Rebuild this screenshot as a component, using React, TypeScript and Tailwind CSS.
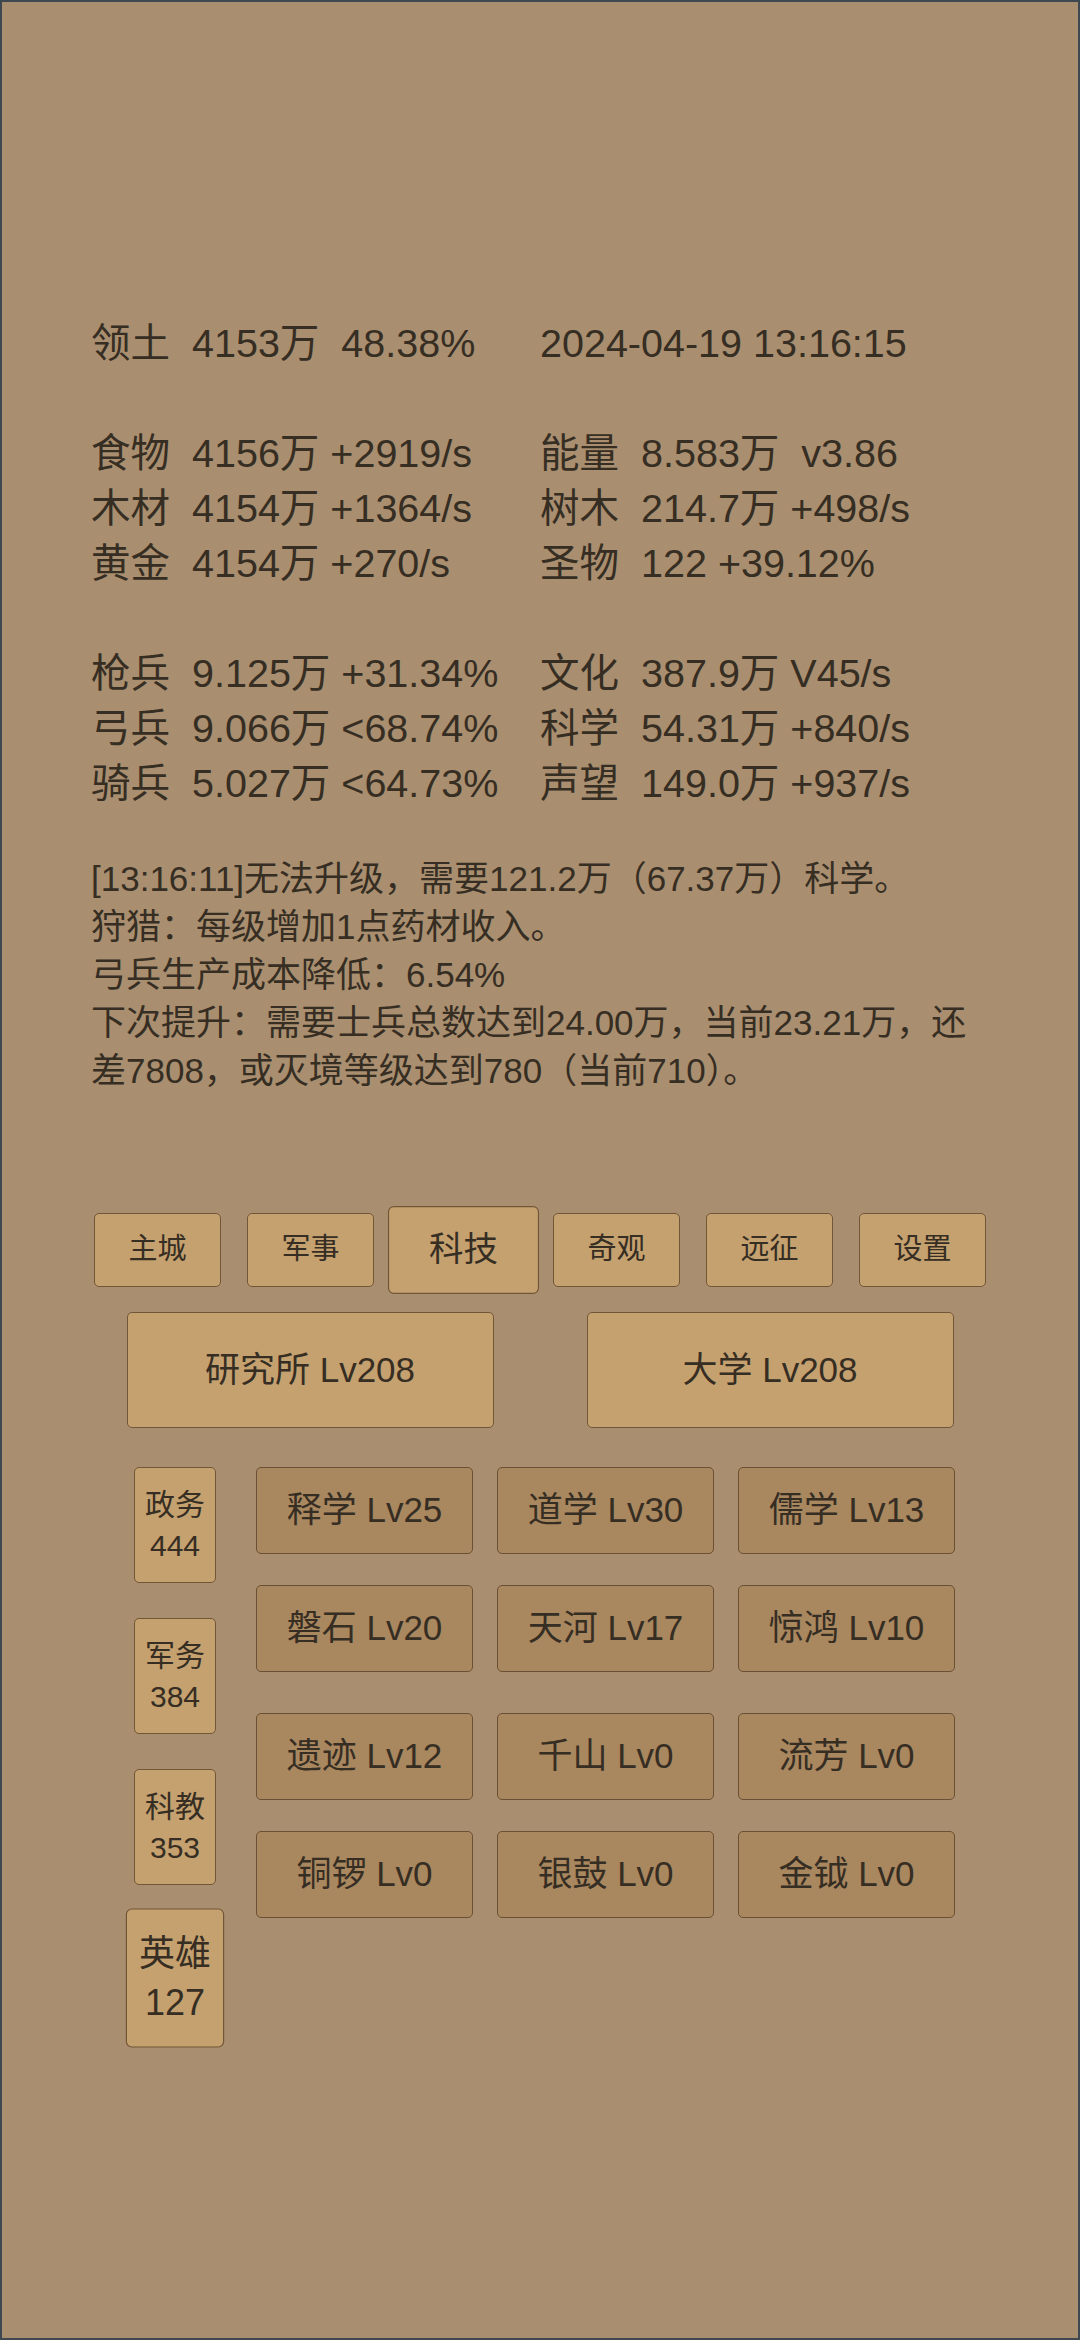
import React from 'react';

type Stat = { label?: string; value: string };

const statRows: [Stat, Stat][][] = [
  [[{ label: '领土', value: '4153万  48.38%' }, { value: '2024-04-19 13:16:15' }]],
  [
    [{ label: '食物', value: '4156万 +2919/s' }, { label: '能量', value: '8.583万  v3.86' }],
    [{ label: '木材', value: '4154万 +1364/s' }, { label: '树木', value: '214.7万 +498/s' }],
    [{ label: '黄金', value: '4154万 +270/s' }, { label: '圣物', value: '122 +39.12%' }],
  ],
  [
    [{ label: '枪兵', value: '9.125万 +31.34%' }, { label: '文化', value: '387.9万 V45/s' }],
    [{ label: '弓兵', value: '9.066万 <68.74%' }, { label: '科学', value: '54.31万 +840/s' }],
    [{ label: '骑兵', value: '5.027万 <64.73%' }, { label: '声望', value: '149.0万 +937/s' }],
  ],
];

const tabs = ['主城', '军事', '科技', '奇观', '远征', '设置'];

const sideItems = [
  { name: '政务', value: '444' },
  { name: '军务', value: '384' },
  { name: '科教', value: '353' },
  { name: '英雄', value: '127', active: true },
];

const techRows = [
  ['释学 Lv25', '道学 Lv30', '儒学 Lv13'],
  ['磐石 Lv20', '天河 Lv17', '惊鸿 Lv10'],
  ['遗迹 Lv12', '千山 Lv0', '流芳 Lv0'],
  ['铜锣 Lv0', '银鼓 Lv0', '金钺 Lv0'],
];

function StatCell({ stat }: { stat: Stat }) {
  return (
    <div className="whitespace-pre">
      {stat.label && <span className="inline-block w-[101px]">{stat.label}</span>}
      <span>{stat.value}</span>
    </div>
  );
}

export default function App() {
  return (
    <div className="w-[1080px] h-[2340px] bg-[#a98f6f] border-2 border-[#3f4851] text-[#362d23] font-['Liberation_Sans','Noto_Sans_CJK_SC',sans-serif] flex flex-col">
      {/* resources */}
      <div className="mt-[314px] ml-[89px] w-[898px] text-[39.5px] leading-[55px]">
        {statRows.map((group, gi) => (
          <div key={gi} className={gi > 0 ? 'mt-[55px]' : ''}>
            {group.map((row, ri) => (
              <div key={ri} className="grid grid-cols-2">
                <StatCell stat={row[0]} />
                <StatCell stat={row[1]} />
              </div>
            ))}
          </div>
        ))}
      </div>

      {/* log */}
      <div className="mt-[44px] ml-[89px] w-[898px] text-[35px] leading-[48px]">
        <p>[13:16:11]无法升级，需要121.2万（67.37万）科学。</p>
        <p>狩猎：每级增加1点药材收入。</p>
        <p>弓兵生产成本降低：6.54%</p>
        <p>下次提升：需要士兵总数达到24.00万，当前23.21万，还差7808，或灭境等级达到780（当前710）。</p>
      </div>

      {/* tabs */}
      <div className="mt-[118px] flex justify-center gap-[26px]">
        {tabs.map((t) => (
          <button
            key={t}
            className={`w-[127px] h-[74px] rounded-[5px] border-[1.5px] border-[#715738] bg-[#c5a16f] text-[29px] flex items-center justify-center ${
              t === '科技' ? 'scale-[1.19]' : ''
            }`}
          >
            {t}
          </button>
        ))}
      </div>

      {/* buildings */}
      <div className="mt-[25px] flex justify-center gap-[93px]">
        <button className="w-[367px] h-[116px] rounded-[5px] border-[1.5px] border-[#715738] bg-[#c5a16f] text-[35px]">
          研究所 Lv208
        </button>
        <button className="w-[367px] h-[116px] rounded-[5px] border-[1.5px] border-[#715738] bg-[#c5a16f] text-[35px]">
          大学 Lv208
        </button>
      </div>

      {/* side menu + tech grid */}
      <div className="mt-[39px] ml-[132px] flex gap-[40px] items-start">
        <div className="flex flex-col gap-[35px]">
          {sideItems.map((s) => (
            <button
              key={s.name}
              className={`w-[82px] h-[116px] rounded-[5px] border-[1.5px] border-[#715738] bg-[#c5a16f] text-[30px] leading-[41px] flex flex-col items-center justify-center ${
                s.active ? 'scale-[1.2]' : ''
              }`}
            >
              <span>{s.name}</span>
              <span>{s.value}</span>
            </button>
          ))}
        </div>
        <div className="flex flex-col">
          {techRows.map((row, ri) => (
            <div
              key={ri}
              className={`flex gap-[24px] ${ri === 1 || ri === 3 ? 'mt-[31px]' : ri === 2 ? 'mt-[41px]' : ''}`}
            >
              {row.map((t) => (
                <button
                  key={t}
                  className="w-[217px] h-[87px] rounded-[5px] border-[1.5px] border-[#6a5034] bg-[#a9875f] text-[35px] flex items-center justify-center"
                >
                  {t}
                </button>
              ))}
            </div>
          ))}
        </div>
      </div>
    </div>
  );
}
